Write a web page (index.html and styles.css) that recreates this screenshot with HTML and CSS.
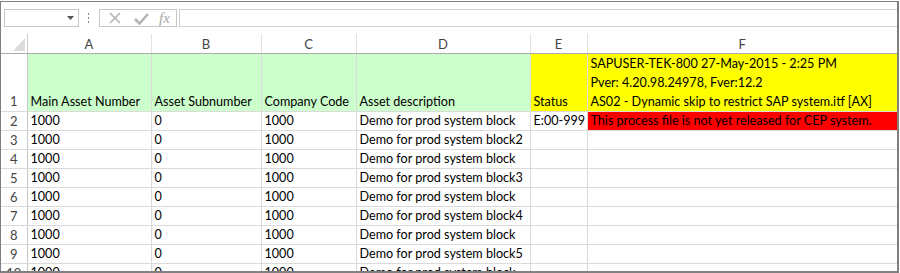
FILE: index.html
```html
<!DOCTYPE html>
<html lang="en">
<head>
    <meta charset="UTF-8">
    <title>Asset sheet</title>
    <link rel="stylesheet" href="styles.css">
</head>
<body>
    <div class="frame">
        <div class="formula-bar">
            <div class="name-box">
                <svg class="drop" width="7" height="4" viewBox="0 0 7 4"><path d="M0 0h7L3.5 4z" fill="#555"/></svg>
            </div>
            <div class="grip"><span></span><span></span><span></span></div>
            <div class="fx-buttons">
                <svg width="14" height="14" viewBox="0 0 14 14"><path d="M2 2l10 10M12 2L2 12" stroke="#b4b4b4" stroke-width="1.6" fill="none"/></svg>
                <svg width="15" height="13" viewBox="0 0 15 13"><path d="M1 7l4.5 4.5L14 2" stroke="#b4b4b4" stroke-width="2.6" fill="none"/></svg>
                <span class="fx">fx</span>
            </div>
            <div class="formula-input"></div>
        </div>

        <table class="sheet">
            <colgroup>
                <col style="width:26px">
                <col style="width:124px">
                <col style="width:110px">
                <col style="width:95px">
                <col style="width:174px">
                <col style="width:57px">
                <col>
            </colgroup>
            <tr class="col-heads">
                <th class="corner"><div class="tri"></div></th>
                <th>A</th><th>B</th><th>C</th><th>D</th><th>E</th><th>F</th>
            </tr>
            <tr class="head-row">
                <th class="rn">1</th>
                <td class="green">Main Asset Number</td>
                <td class="green">Asset Subnumber</td>
                <td class="green">Company Code</td>
                <td class="green">Asset description</td>
                <td class="yellow">Status</td>
                <td class="yellow">SAPUSER-TEK-800 27-May-2015 - 2:25 PM<br>Pver: 4.20.98.24978, Fver:12.2<br>AS02 - Dynamic skip to restrict SAP system.itf [AX]</td>
            </tr>
            <tr>
                <th class="rn">2</th><td>1000</td><td>0</td><td>1000</td><td>Demo for prod system block</td><td>E:00-999</td>
                <td class="red">This process file is not yet released for CEP system.</td>
            </tr>
            <tr><th class="rn">3</th><td>1000</td><td>0</td><td>1000</td><td>Demo for prod system block2</td><td></td><td></td></tr>
            <tr><th class="rn">4</th><td>1000</td><td>0</td><td>1000</td><td>Demo for prod system block</td><td></td><td></td></tr>
            <tr><th class="rn">5</th><td>1000</td><td>0</td><td>1000</td><td>Demo for prod system block3</td><td></td><td></td></tr>
            <tr><th class="rn">6</th><td>1000</td><td>0</td><td>1000</td><td>Demo for prod system block</td><td></td><td></td></tr>
            <tr><th class="rn">7</th><td>1000</td><td>0</td><td>1000</td><td>Demo for prod system block4</td><td></td><td></td></tr>
            <tr><th class="rn">8</th><td>1000</td><td>0</td><td>1000</td><td>Demo for prod system block</td><td></td><td></td></tr>
            <tr><th class="rn">9</th><td>1000</td><td>0</td><td>1000</td><td>Demo for prod system block5</td><td></td><td></td></tr>
            <tr><th class="rn">10</th><td>1000</td><td>0</td><td>1000</td><td>Demo for prod system block</td><td></td><td></td></tr>
        </table>
    </div>
</body>
</html>
```

FILE: styles.css
```css
body {
    margin: 0;
    padding-top: 1px;
    font-family: Lato, "Liberation Sans", sans-serif;
    background: #fff;
}
.frame {
    width: 896px;
    height: 269px;
    border: 1px solid #808080;
    border-right-width: 2px;
    border-bottom-width: 2px;
    overflow: hidden;
    background: #fff;
}
.formula-bar {
    display: flex;
    align-items: center;
    height: 32px;
    padding-left: 3px;
}
.name-box {
    position: relative;
    width: 73px;
    height: 16px;
    border: 1px solid #c6c6c6;
}
.drop {
    position: absolute;
    right: 4px;
    top: 6px;
}
.grip {
    display: flex;
    flex-direction: column;
    gap: 2px;
    margin: 0 10px 0 9px;
}
.grip span {
    width: 1px;
    height: 2px;
    background: #888;
}
.fx-buttons {
    display: flex;
    align-items: center;
    gap: 12px;
    width: 68px;
    height: 16px;
    padding-left: 8px;
    border: 1px solid #c6c6c6;
}
.fx {
    font-family: "Liberation Serif", serif;
    font-style: italic;
    font-size: 15px;
    color: #a6a6a6;
    margin-left: -2px;
}
.formula-input {
    flex: 1;
    height: 16px;
    margin-left: 2px;
    border: 1px solid #d0d0d0;
    border-right: none;
}
.sheet {
    table-layout: fixed;
    border-collapse: collapse;
    width: 897px;
    font-size: 12.6px;
    color: #000;
}
.sheet td, .sheet th {
    border: 1px solid #dadada;
    padding: 0 3px;
    white-space: nowrap;
    overflow: hidden;
    font-weight: normal;
    line-height: 18px;
}
.sheet td {
    text-align: left;
}
.col-heads th {
    height: 19px;
    color: #444;
    text-align: center;
    font-size: 13px;
    border-top: none;
    border-bottom-color: #ababab;
    border-right-color: #e1e1e1;
}
.sheet th.rn {
    text-align: center;
    color: #444;
    padding: 0;
    font-size: 13px;
    border-left: none;
    border-right-color: #c8c8c8;
}
.corner {
    position: relative;
    border-left: none !important;
    border-right-color: #c8c8c8 !important;
}
.tri {
    position: absolute;
    right: 2px;
    bottom: 2px;
    width: 0;
    height: 0;
    border-left: 12px solid transparent;
    border-bottom: 13px solid #dcdcdc;
}
.head-row td, .head-row th {
    height: 57px;
    vertical-align: bottom;
    line-height: 19px;
}
.sheet tr {
    height: 19px;
}
.green {
    background: #ccffcc;
}
.yellow {
    background: #ffff00;
}
.red {
    background: #ff0000;
}
```
